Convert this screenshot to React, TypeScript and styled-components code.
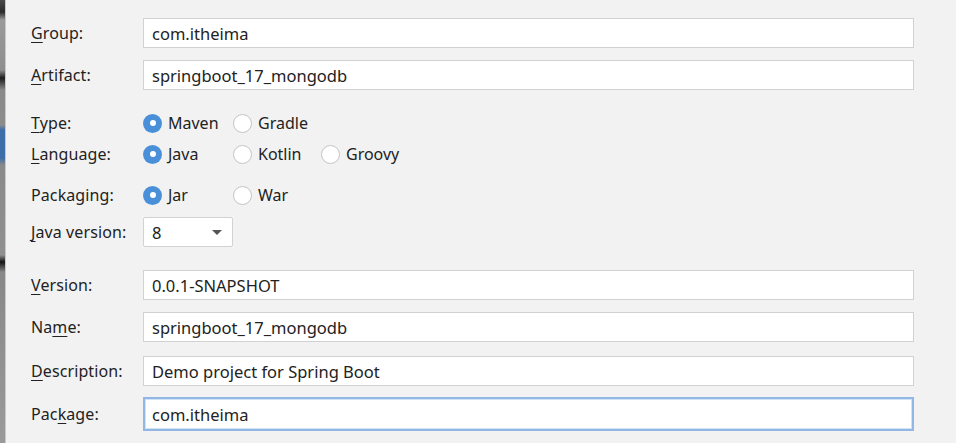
import React from 'react';
import styled, { createGlobalStyle } from 'styled-components';

const GlobalStyle = createGlobalStyle`
  html, body {
    margin: 0;
    padding: 0;
    background: #f2f2f2;
  }
  body {
    font-family: "Noto Sans", "Open Sans", sans-serif;
    color: #222;
  }
`;

const Page = styled.div`
  display: flex;
  width: 956px;
  height: 443px;
  overflow: hidden;
  background: #f2f2f2;
`;

const BehindEdge = styled.div`
  width: 5px;
  flex-shrink: 0;
  background: linear-gradient(
    180deg,
    #4a4a4a 0px, #2b2b2b 12px, #9a9a9a 20px, #8e8e8e 70px,
    #1c1c1c 78px, #8a8a8a 90px, #8c8c8c 125px, #3d6ea8 130px,
    #3d6ea8 158px, #8a8a8a 165px, #909090 255px, #141414 262px,
    #888888 272px, #9a9a9a 443px
  );
  border-right: 1px solid #c9c9c9;
`;

const Form = styled.div`
  display: flex;
  flex-direction: column;
  padding: 18px 0 0 25px;
`;

const Row = styled.div<{ $gap: number; $h: number }>`
  display: grid;
  grid-template-columns: 112px 771px;
  align-items: center;
  margin-top: ${({ $gap }) => $gap}px;
  height: ${({ $h }) => $h}px;
`;

const Label = styled.span`
  font-size: 16px;
  letter-spacing: 0.1px;
`;

const Key = styled.u`
  text-decoration-thickness: 1px;
  text-underline-offset: 3px;
`;

const Field = styled.div<{ $focused?: boolean }>`
  display: flex;
  align-items: center;
  height: 100%;
  box-sizing: border-box;
  padding-left: ${({ $focused }) => ($focused ? 7 : 8)}px;
  background: #fff;
  border: ${({ $focused }) => ($focused ? '2px solid #93b7e4' : '1px solid #d2d2d2')};
  box-shadow: ${({ $focused }) => ($focused ? 'inset 0 0 0 1px #d2e2f5' : 'none')};
  font-size: 16.5px;
`;

const Options = styled.div`
  display: flex;
  align-items: center;
`;

const Option = styled.label<{ $w: number }>`
  display: flex;
  align-items: center;
  width: ${({ $w }) => $w}px;
  font-size: 16px;
`;

const Radio = styled.span<{ $on?: boolean }>`
  width: 19px;
  height: 19px;
  box-sizing: border-box;
  border-radius: 50%;
  margin-right: 6px;
  flex-shrink: 0;
  display: flex;
  align-items: center;
  justify-content: center;
  background: ${({ $on }) => ($on ? '#4a90d9' : '#fff')};
  border: ${({ $on }) => ($on ? 'none' : '1px solid #c4c4c4')};

  &::after {
    content: "";
    display: ${({ $on }) => ($on ? 'block' : 'none')};
    width: 6px;
    height: 6px;
    border-radius: 50%;
    background: #fff;
  }
`;

const Select = styled.div`
  display: flex;
  align-items: center;
  justify-content: space-between;
  width: 90px;
  height: 100%;
  box-sizing: border-box;
  padding: 0 10px 0 8px;
  background: #fff;
  border: 1px solid #d2d2d2;
  border-radius: 2px;
  font-size: 16.5px;
`;

const Caret = styled.span`
  width: 0;
  height: 0;
  border-left: 5px solid transparent;
  border-right: 5px solid transparent;
  border-top: 5px solid #555;
`;

const RadioGroup = ({ items, widths, selected }: { items: string[]; widths: number[]; selected: number }) => (
  <Options>
    {items.map((it, i) => (
      <Option key={it} $w={widths[i]}>
        <Radio $on={i === selected} />
        {it}
      </Option>
    ))}
  </Options>
);

const App = () => (
  <Page>
    <GlobalStyle />
    <BehindEdge />
    <Form>
      <Row $gap={0} $h={30}>
        <Label><Key>G</Key>roup:</Label>
        <Field>com.itheima</Field>
      </Row>
      <Row $gap={12} $h={30}>
        <Label><Key>A</Key>rtifact:</Label>
        <Field>springboot_17_mongodb</Field>
      </Row>
      <Row $gap={21} $h={24}>
        <Label><Key>T</Key>ype:</Label>
        <RadioGroup items={['Maven', 'Gradle']} widths={[90, 90]} selected={0} />
      </Row>
      <Row $gap={7} $h={24}>
        <Label><Key>L</Key>anguage:</Label>
        <RadioGroup items={['Java', 'Kotlin', 'Groovy']} widths={[90, 88, 90]} selected={0} />
      </Row>
      <Row $gap={17} $h={24}>
        <Label>Packaging:</Label>
        <RadioGroup items={['Jar', 'War']} widths={[90, 90]} selected={0} />
      </Row>
      <Row $gap={10} $h={30}>
        <Label><Key>J</Key>ava version:</Label>
        <Select>
          8
          <Caret />
        </Select>
      </Row>
      <Row $gap={23} $h={30}>
        <Label><Key>V</Key>ersion:</Label>
        <Field>0.0.1-SNAPSHOT</Field>
      </Row>
      <Row $gap={12} $h={30}>
        <Label>Na<Key>m</Key>e:</Label>
        <Field>springboot_17_mongodb</Field>
      </Row>
      <Row $gap={14} $h={30}>
        <Label><Key>D</Key>escription:</Label>
        <Field>Demo project for Spring Boot</Field>
      </Row>
      <Row $gap={11} $h={34}>
        <Label>Pac<Key>k</Key>age:</Label>
        <Field $focused>com.itheima</Field>
      </Row>
    </Form>
  </Page>
);

export default App;
